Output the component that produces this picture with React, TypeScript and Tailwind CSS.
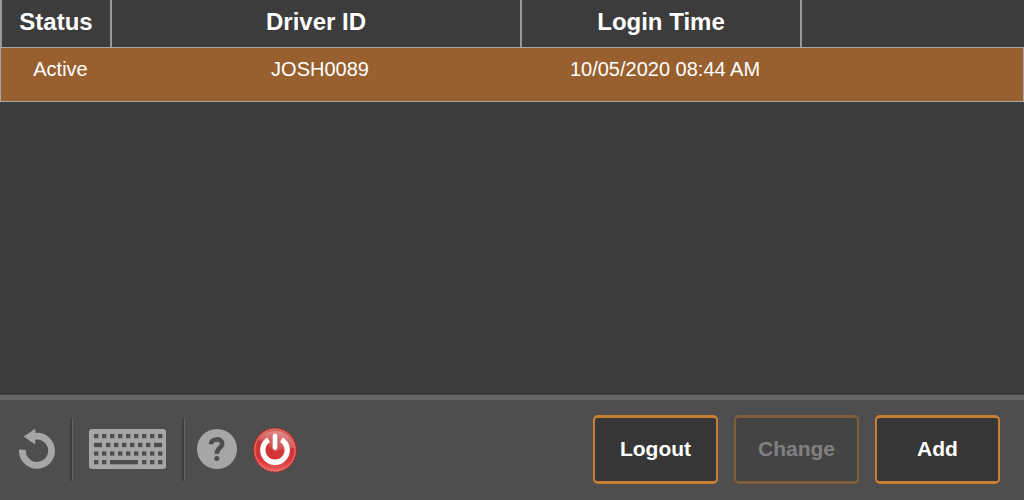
import React from "react";

type Login = { status: string; driver: string; time: string };

const logins: Login[] = [
  { status: "Active", driver: "JOSH0089", time: "10/05/2020 08:44 AM" },
];

const fullRow = [5, 13, 21, 29, 37, 45, 53, 61, 69].map((x) => [x, 4.4]);
const keyRows: { y: number; keys: number[][] }[] = [
  { y: 5, keys: fullRow },
  { y: 13.8, keys: [[5, 8], [17, 4.4], [25, 4.4], [33, 4.4], [41, 4.4], [49, 4.4], [57, 4.4], [65, 8]] },
  { y: 22.4, keys: fullRow },
  { y: 31, keys: [[5, 4.4], [13, 4.4], [21, 28], [53, 4.4], [61, 4.4], [69, 4.4]] },
];

function UndoIcon() {
  return (
    <svg className="block h-10 w-9" viewBox="0 0 36 40" aria-hidden="true">
      <path d="M3.4 20.8A14.6 14.6 0 1 0 18 7.2H15" fill="none" stroke="#a6a6a6" strokeWidth="6.8" />
      <path d="M4.6 7.6 16.2 -0.2V15.6Z" fill="#a6a6a6" />
    </svg>
  );
}

function KeyboardIcon() {
  return (
    <svg className="block h-10 w-[77px]" viewBox="0 0 77 40" aria-hidden="true">
      <rect width="77" height="40" rx="3" fill="#a6a6a6" />
      {keyRows.map((row) =>
        row.keys.map(([x, w]) => (
          <rect key={`${row.y}-${x}`} x={x} y={row.y} width={w} height="4.3" fill="#4e4e4e" />
        )),
      )}
    </svg>
  );
}

function HelpIcon() {
  return (
    <svg className="block size-10" viewBox="0 0 40 40" aria-hidden="true">
      <circle cx="20" cy="20" r="20" fill="#a6a6a6" />
      <path
        d="M14 15.2C14.2 9 25.2 8.8 25.2 14.8C25.2 19 19.8 18.8 19.8 24.8"
        fill="none"
        stroke="#4e4e4e"
        strokeWidth="4.6"
      />
      <circle cx="19.8" cy="29.4" r="2.5" fill="#4e4e4e" />
    </svg>
  );
}

function PowerIcon() {
  return (
    <svg className="block h-[46px] w-[45px]" viewBox="0 0 45 46" aria-hidden="true">
      <defs>
        <linearGradient id="power-base" x1="0" y1="0" x2="0" y2="1">
          <stop offset="0" stopColor="#cf5450" />
          <stop offset="0.3" stopColor="#c93636" />
          <stop offset="0.7" stopColor="#d63436" />
          <stop offset="1" stopColor="#ee625e" />
        </linearGradient>
        <linearGradient id="power-gloss" x1="0.3" y1="1" x2="0.9" y2="0">
          <stop offset="0" stopColor="#fff" stopOpacity="0.04" />
          <stop offset="1" stopColor="#fff" stopOpacity="0.42" />
        </linearGradient>
      </defs>
      <ellipse cx="22" cy="23" rx="21.9" ry="22.2" fill="url(#power-base)" />
      <ellipse cx="22" cy="23" rx="21.7" ry="22" fill="none" stroke="#7d2522" strokeDasharray="2 1.5" />
      <ellipse cx="22" cy="23" rx="20.2" ry="20.5" fill="none" stroke="#e27a74" />
      <path d="M5 13A20 20 0 0 1 41.6 21C34 20 28 22 22 26C18 18 12 15 5 13Z" fill="url(#power-gloss)" />
      <path d="M15.6 12.7A12.2 12.2 0 1 0 28.4 12.7" fill="none" stroke="#fff" strokeWidth="5.4" />
      <path d="M22 8.8V20.8" stroke="#fff" strokeWidth="4.6" strokeLinecap="round" />
    </svg>
  );
}

function Divider() {
  return <div className="h-[62px] w-[3px] border-r border-[#666] bg-[#3e3e3e]" />;
}

function ActionButton({ label, disabled = false }: { label: string; disabled?: boolean }) {
  return (
    <button
      type="button"
      disabled={disabled}
      className="h-[69px] w-[125px] rounded-[5px] border-x-2 border-y-3 border-[#c97e36] bg-[#363636] pb-0.5 text-[21px] leading-6 font-bold text-white disabled:border-[#805e3c] disabled:bg-[#444] disabled:text-[#808080]"
    >
      {label}
    </button>
  );
}

export default function App() {
  return (
    <div className="flex min-h-screen flex-col bg-[#3c3c3c] font-['Liberation_Sans',Arial,sans-serif] text-white">
      <main className="grow">
        <table className="w-full table-fixed border-separate border-spacing-0 text-center">
          <colgroup>
            <col className="w-[110px]" />
            <col className="w-[410px]" />
            <col className="w-[280px]" />
            <col />
          </colgroup>
          <thead>
            <tr className="h-[47px] text-2xl leading-7">
              {["Status", "Driver ID", "Login Time", ""].map((title) => (
                <th key={title} scope="col" className="border-l-2 border-[#999] p-0 pb-1 font-bold">
                  {title}
                </th>
              ))}
            </tr>
          </thead>
          <tbody>
            {logins.map((login) => (
              <tr
                key={login.driver}
                className="h-[55px] bg-[#98602f] align-top text-xl leading-6 *:border-y *:border-[#a6a6a6] *:pt-[9px] *:pl-2.5"
              >
                <td className="border-l">{login.status}</td>
                <td>{login.driver}</td>
                <td>{login.time}</td>
                <td className="border-r" />
              </tr>
            ))}
          </tbody>
        </table>
      </main>
      <footer className="flex items-center justify-between border-t-5 border-[#666] bg-[#4e4e4e] pt-[15px] pr-6 pb-4 pl-[19px]">
        <nav className="flex items-center" aria-label="Tools">
          <button type="button" aria-label="Back" className="mr-[15px] pb-0.5">
            <UndoIcon />
          </button>
          <Divider />
          <button type="button" aria-label="Keyboard" className="mx-4 pb-0.5">
            <KeyboardIcon />
          </button>
          <Divider />
          <button type="button" aria-label="Help" className="ml-3 pb-0.5">
            <HelpIcon />
          </button>
          <button type="button" aria-label="Power" className="ml-4">
            <PowerIcon />
          </button>
        </nav>
        <div className="flex gap-4">
          <ActionButton label="Logout" />
          <ActionButton label="Change" disabled />
          <ActionButton label="Add" />
        </div>
      </footer>
    </div>
  );
}
